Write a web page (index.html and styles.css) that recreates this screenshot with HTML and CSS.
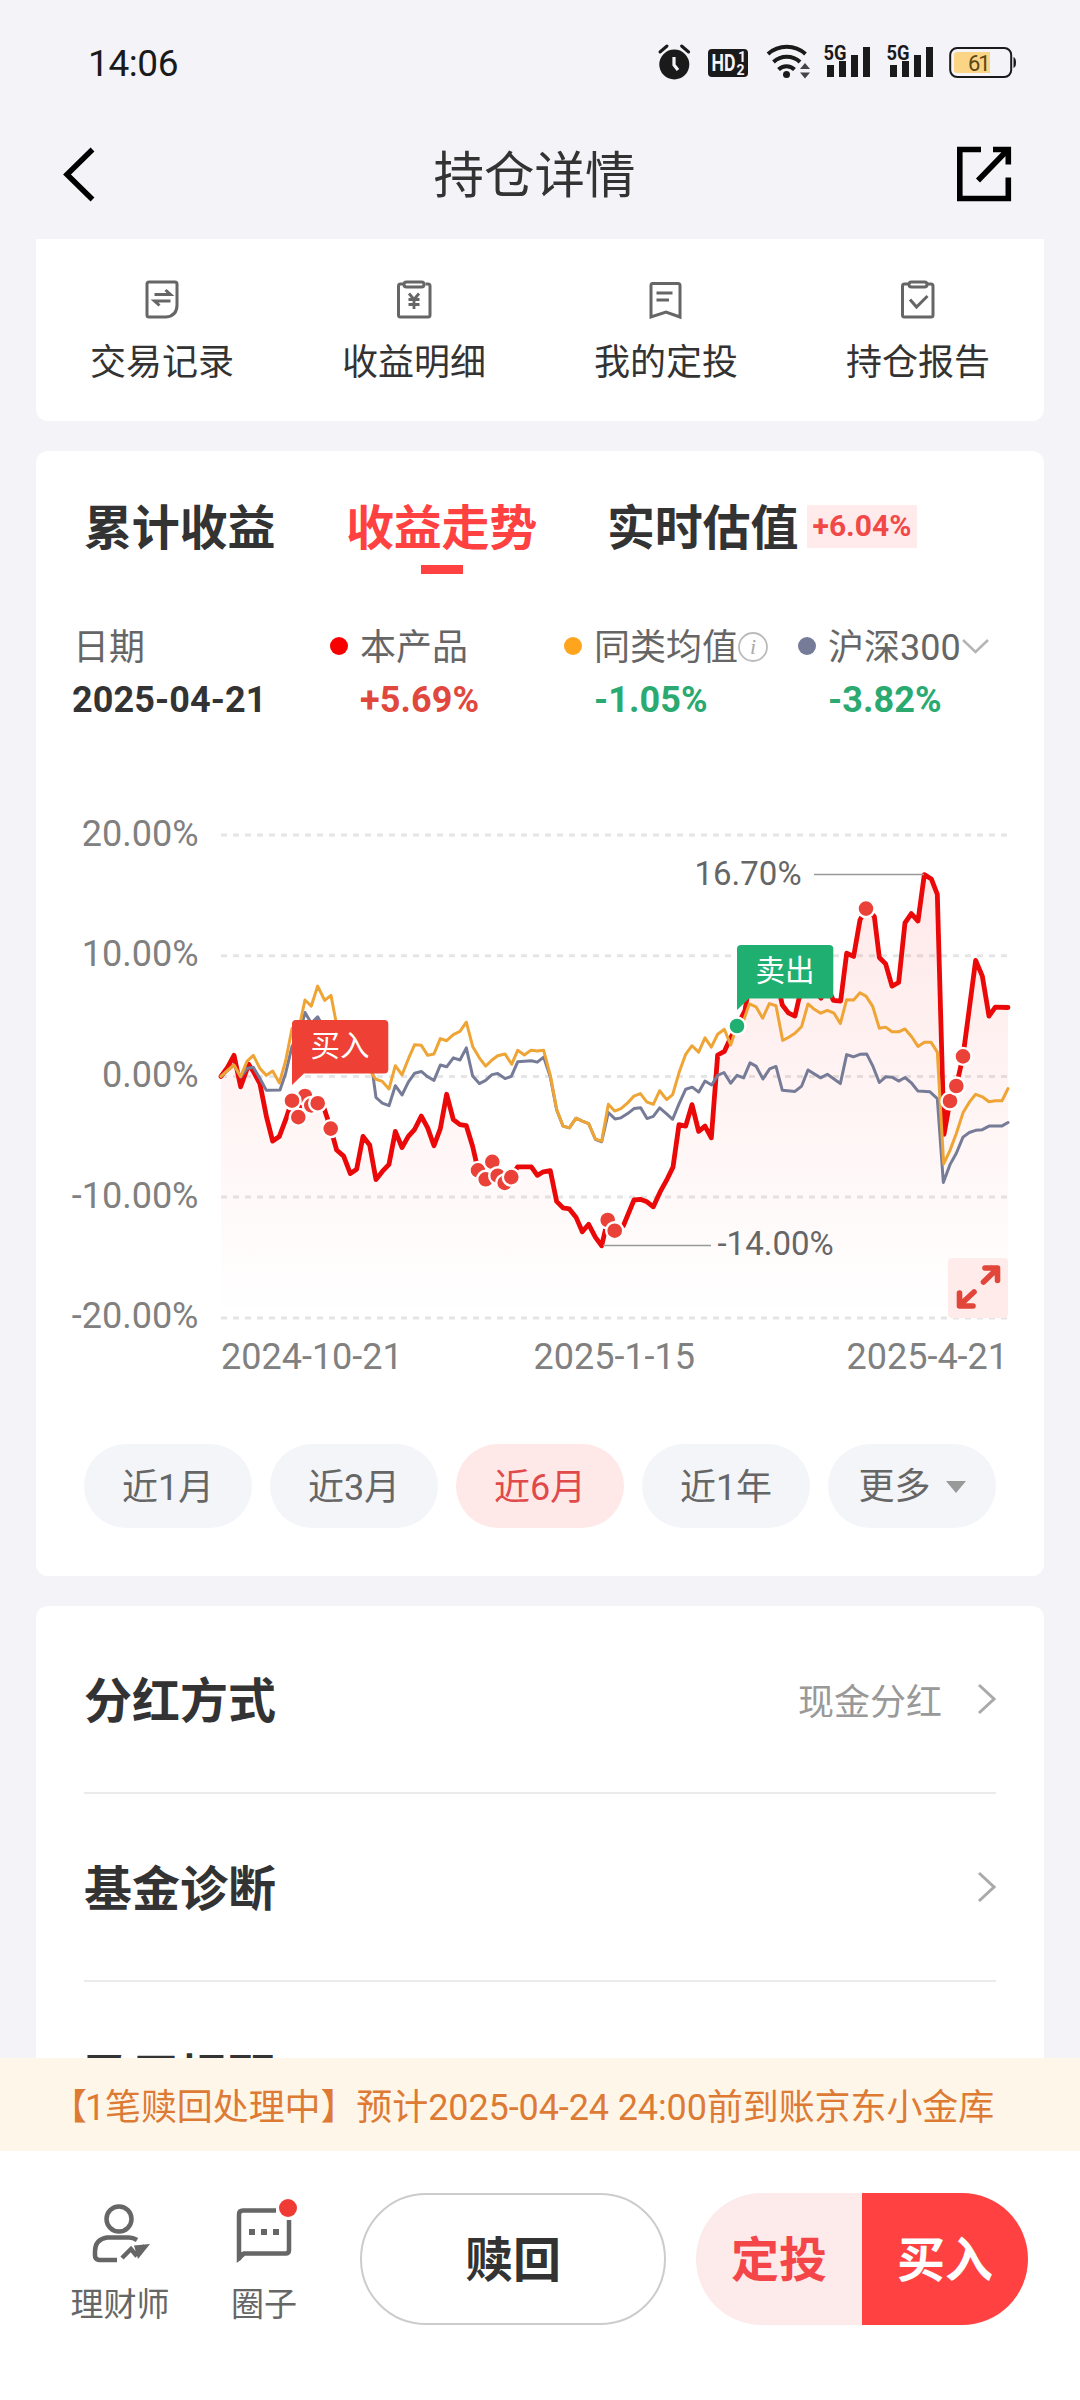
FILE: index.html
```html
<!DOCTYPE html>
<html lang="zh-CN">
<head>
<meta charset="utf-8">
<title>持仓详情</title>
<link rel="stylesheet" href="styles.css">
</head>
<body>
<div class="page">
  <div class="status">
    <span class="clock">14:06</span>
    <svg class="status-icons" width="374" height="50" viewBox="650 38 374 50">
      <g fill="#1a1a1a">
        <circle cx="674.3" cy="64.5" r="15"/>
        <path d="M660 52l7-6M688.600 52l-7-6" stroke="#1a1a1a" stroke-width="3" stroke-linecap="round"/>
        <path d="M674 57v8l4 5" stroke="#f4f3f8" stroke-width="3.200" fill="none"/>
        <rect x="708" y="49" width="40" height="28" rx="4"/>
        <text class="hd" x="711.500" y="71" fill="#f4f3f8" textLength="24" lengthAdjust="spacingAndGlyphs">HD</text>
        <text class="hd-s" x="738" y="62" fill="#f4f3f8">1</text>
        <text class="hd-s" x="736.500" y="74.500" fill="#f4f3f8">2</text>
        <circle cx="786.500" cy="74.500" r="3.500"/>
        <path d="M778.500 69.500a11.500 11.500 0 0 1 16 0M773.500 62a19.500 19.500 0 0 1 26.500 0M768 54a28 28 0 0 1 37.500 0" fill="none" stroke="#1a1a1a" stroke-width="4"/>
        <path d="M800 69l5-6 5 6zM800 72.500l5 6 5-6z" fill="#444"/>
        <text class="net" x="823.500" y="60" textLength="23" lengthAdjust="spacingAndGlyphs">5G</text>
        <path d="M827 65h7v12h-7zM839 61h7v16h-7zM851 55h7v22h-7zM863 47h7v30h-7z"/>
        <text class="net" x="886.500" y="60" textLength="23" lengthAdjust="spacingAndGlyphs">5G</text>
        <path d="M890 65h7v12h-7zM902 61h7v16h-7zM914 55h7v22h-7zM926 47h7v30h-7z"/>
        <path d="M1013.500 57q2.500 1 2.500 5.500t-2.500 5.500z"/>
      </g>
      <path d="M957 52h33v21h-33q-3 0-3-3v-15q0-3 3-3z" fill="#fad585"/>
      <rect x="950.200" y="48" width="61" height="29" rx="7" fill="none" stroke="#1a1a1a" stroke-width="2"/>
      <text class="bat" x="968" y="71">61</text>
    </svg>
  </div>

  <header class="header">
    <svg width="56" height="60" viewBox="62 143 56 60"><path d="M92.500 148.500L67 173.500l25.500 25" fill="none" stroke="#000" stroke-width="5.500"/></svg>
    <h1>持仓详情</h1>
    <svg width="56" height="58" viewBox="956 145.500 56 58"><path d="M981 150H959.800V199H1008.300V178M993 150H1008.300V165M1008 150L978 181" fill="none" stroke="#000" stroke-width="5.600"/></svg>
  </header>

  <main class="scroll">
    <nav class="card quick">
      <a class="quick-item">
        <svg width="44" height="44" viewBox="140 277 44 44"><path d="M149 282h26q2 0 2 2v21q0 11-11 12h-17q-2 0-2-2v-31q0-2 2-2z"/><path d="M154.500 294.500h16l-5-4.500M170.500 301h-16l5 4.500"/></svg>
        <span>交易记录</span>
      </a>
      <a class="quick-item">
        <svg width="44" height="44" viewBox="392 277 44 44"><path d="M403 284h-2.500q-2 0-2 2v29q0 2 2 2h27.500q2 0 2-2v-29q0-2-2-2h-2.500"/><rect x="404" y="282" width="20" height="5" rx="2.500"/><path d="M409 293.500l5 6 5-6M414 299v10M408.500 299.500h11M408.500 304.500h11" stroke-width="2.800"/></svg>
        <span>收益明细</span>
      </a>
      <a class="quick-item">
        <svg width="44" height="44" viewBox="644 277 44 44"><path d="M652.500 283.500h25.500q2 0 2 2v31.500l-14-5-15 5v-31.500q0-2 1.500-2z"/><path d="M656.500 293h16M656.500 300h12.500"/></svg>
        <span>我的定投</span>
      </a>
      <a class="quick-item">
        <svg width="44" height="44" viewBox="896 277 44 44"><path d="M908 284h-3.500q-2 0-2 2v29q0 2 2 2h26.500q2 0 2-2v-29q0-2-2-2h-3.500"/><rect x="909" y="282" width="18" height="5" rx="2.500"/><path d="M910 299.500l6.500 7.500 11-11"/></svg>
        <span>持仓报告</span>
      </a>
    </nav>

    <section class="card trend">
      <div class="tabs">
        <span class="tab">累计收益</span>
        <span class="tab active">收益走势</span>
        <span class="tab">实时估值</span>
        <span class="tag">+6.04%</span>
      </div>

      <div class="legend">
        <div class="date"><div class="name">日期</div><div class="val">2025-04-21</div></div>
        <div class="series">
          <i class="dot red"></i>
          <div><div class="name">本产品</div><div class="val up">+5.69%</div></div>
        </div>
        <div class="series">
          <i class="dot gold"></i>
          <div>
            <div class="name">同类均值<svg width="32" height="32" viewBox="1 1 32 32"><circle cx="16" cy="16" r="14" fill="none" stroke="#bbb" stroke-width="1.800"/><text class="info" x="16" y="23" text-anchor="middle">i</text></svg></div>
            <div class="val down">-1.05%</div>
          </div>
        </div>
        <div class="series">
          <i class="dot slate"></i>
          <div>
            <div class="name">沪深300<svg width="30" height="20" viewBox="1 1 30 20"><path d="M3 3l12.500 12L28 3" fill="none" stroke="#b5b5b5" stroke-width="2.500"/></svg></div>
            <div class="val down">-3.82%</div>
          </div>
        </div>
      </div>

      <svg class="chart" width="1008" height="680" viewBox="36 723 1008 680">
        <defs>
          <linearGradient id="fade" gradientUnits="userSpaceOnUse" x1="0" y1="209" x2="0" y2="1450">
            <stop offset="0" stop-color="#ff2020" stop-opacity=".1"/>
            <stop offset=".5" stop-color="#ff2020" stop-opacity=".05"/>
            <stop offset="1" stop-color="#ff2020" stop-opacity="0"/>
          </linearGradient>
        </defs>
        <path class="grid" d="M221 835H1008M221 955.700H1008M221 1076.400H1008M221 1197.100H1008M221 1317.900H1008"/>
        <g class="axis" text-anchor="end">
          <text x="198.500" y="846">20.00%</text>
          <text x="198.500" y="966">10.00%</text>
          <text x="198.500" y="1086.500">0.00%</text>
          <text x="198.500" y="1207.500">-10.00%</text>
          <text x="198.500" y="1328">-20.00%</text>
        </g>
        <g class="axis">
          <text x="221" y="1368.500">2024-10-21</text>
          <text x="533.500" y="1368.500">2025-1-15</text>
          <text x="846.500" y="1368.500">2025-4-21</text>
        </g>
        <!-- Series are plotted in plot units: 33.8 per percent, 19.35 per trading day -->
        <g class="lines" transform="translate(200 800) scale(.33333 .35714)">
          <path fill="url(#fade)" stroke="none" d="M63 1450V774L83 748 102 715 122 803 146 740 160 760 180 795 199 885 218 955 238 942 257 895 276 842 295 888 315 829 334 855 353 849 373 865 392 920 410 980 431 997 451 1046 470 1034 489 942 509 966 528 1063 547 1040 567 1020 586 928 606 973 625 942 644 922 664 885 683 918 702 968 721 920 740 824 760 895 780 909 799 912 818 970 834 1035 853 1062 877 1013 893 1052 913 1072 934 1056 953 1027 994 1027 1012 1051 1030 1041 1051 1038 1070 1124 1089 1142 1108 1145 1128 1168 1147 1209 1166 1188 1186 1224 1205 1248 1223 1176 1244 1206 1270 1192 1302 1120 1321 1118 1341 1125 1360 1139 1380 1098 1399 1066 1419 1028 1437 909 1457 913 1476 853 1496 928 1515 913 1534 946 1553 714 1573 704 1592 666 1611 633 1635 590 1645 530 1665 500 1700 490 1725 510 1740 545 1747 574 1765 596 1785 605 1797 556 1820 515 1840 530 1863 555 1880 520 1900 561 1922 563 1940 429 1961 438 1980 336 1998 304 2023 326 2038 441 2057 459 2076 521 2096 511 2115 344 2134 318 2154 339 2173 209 2194 221 2212 264 2232 936 2250 843 2269 801 2289 718 2327 449 2347 493 2367 605 2386 580 2424 581V1450Z"/>
          <polyline class="l-red" points="63,774 83,748 102,715 122,803 146,740 160,760 180,795 199,885 218,955 238,942 257,895 276,842 295,888 315,829 334,855 353,849 373,865 392,920 410,980 431,997 451,1046 470,1034 489,942 509,966 528,1063 547,1040 567,1020 586,928 606,973 625,942 644,922 664,885 683,918 702,968 721,920 740,824 760,895 780,909 799,912 818,970 834,1035 853,1062 877,1013 893,1052 913,1072 934,1056 953,1027 994,1027 1012,1051 1030,1041 1051,1038 1070,1124 1089,1142 1108,1145 1128,1168 1147,1209 1166,1188 1186,1224 1205,1248 1223,1176 1244,1206 1270,1192 1302,1120 1321,1118 1341,1125 1360,1139 1380,1098 1399,1066 1419,1028 1437,909 1457,913 1476,853 1496,928 1515,913 1534,946 1553,714 1573,704 1592,666 1611,633 1635,590 1645,530 1665,500 1700,490 1725,510 1740,545 1747,574 1765,596 1785,605 1797,556 1820,515 1840,530 1863,555 1880,520 1900,561 1922,563 1940,429 1961,438 1980,336 1998,304 2023,326 2038,441 2057,459 2076,521 2096,511 2115,344 2134,318 2154,339 2173,209 2194,221 2212,264 2232,936 2250,843 2269,801 2289,718 2327,449 2347,493 2367,605 2386,580 2424,581"/>
          <polyline class="l-slate" points="63,774 83,757 102,742 122,776 141,752 160,748 180,780 199,813 240,812 257,765 276,690 300,650 315,595 334,625 353,607 372,640 412,660 450,720 490,740 518,765 528,833 547,849 567,856 586,800 606,826 625,790 644,765 664,760 683,775 702,785 721,742 740,747 760,722 780,728 799,694 818,773 838,794 857,785 876,769 893,766 915,780 934,774 953,733 994,730 1012,734 1031,720 1051,776 1070,868 1089,913 1108,918 1128,891 1147,899 1166,906 1186,950 1205,957 1225,875 1245,893 1263,890 1283,878 1302,864 1322,862 1341,892 1360,886 1379,862 1399,878 1418,894 1437,851 1457,810 1477,804 1496,818 1515,787 1535,798 1553,771 1572,763 1592,793 1611,771 1631,778 1650,736 1668,745 1689,781 1709,753 1728,746 1747,813 1785,816 1805,801 1824,756 1862,778 1882,768 1921,794 1940,713 1960,719 1980,712 2000,711 2019,746 2038,791 2057,775 2076,776 2096,787 2115,777 2135,793 2154,815 2190,817 2212,836 2230,1071 2250,1021 2269,989 2289,944 2308,931 2327,925 2347,923 2367,913 2405,913 2424,903"/>
          <polyline class="l-gold" points="63,774 83,757 102,742 122,774 141,732 160,715 180,752 199,771 218,759 238,792 257,730 276,640 300,625 315,560 334,577 353,521 374,561 393,547 412,640 450,700 490,730 515,765 528,782 547,788 567,809 586,744 606,770 625,725 644,685 664,687 683,715 702,711 721,668 740,674 760,657 780,648 799,622 818,690 838,722 857,745 876,728 893,716 915,711 935,740 953,701 973,714 992,701 1012,703 1031,701 1051,771 1070,866 1089,913 1108,918 1128,891 1147,899 1166,906 1186,949 1205,955 1225,852 1244,871 1263,864 1283,848 1302,829 1321,822 1341,846 1360,852 1379,814 1400,839 1418,825 1437,764 1457,712 1476,688 1496,706 1515,666 1534,692 1553,656 1573,642 1592,686 1611,633 1630,620 1648,571 1668,579 1688,611 1708,570 1728,576 1748,673 1765,665 1785,653 1805,634 1824,571 1843,586 1862,597 1882,589 1902,597 1921,626 1940,559 1961,560 1980,540 1998,549 2018,578 2038,639 2057,636 2076,649 2096,649 2115,641 2135,663 2154,690 2173,678 2193,678 2212,706 2231,1019 2250,981 2269,934 2289,876 2308,846 2327,824 2347,831 2367,845 2386,842 2406,842 2424,808"/>
        </g>
        <path d="M814 874.600H924M603 1245.400H711" stroke="#999" stroke-width="1.500"/>
        <g class="peak">
          <text x="694.500" y="885">16.70%</text>
          <text x="717.500" y="1255">-14.00%</text>
        </g>
        <g class="marks">
          <circle cx="305" cy="1096" r="8.500"/><circle cx="311.300" cy="1105.400" r="8.500"/><circle cx="298.300" cy="1117.100" r="8.500"/><circle cx="292" cy="1100.700" r="8.500"/><circle cx="317.700" cy="1103.200" r="8.500"/><circle cx="330.700" cy="1128.600" r="8.500"/>
          <circle cx="478" cy="1170.400" r="8.500"/><circle cx="485.700" cy="1179.300" r="8.500"/><circle cx="492.300" cy="1161.800" r="8.500"/><circle cx="497.700" cy="1175.700" r="8.500"/><circle cx="504.700" cy="1182.900" r="8.500"/><circle cx="511.300" cy="1177.100" r="8.500"/>
          <circle cx="607.700" cy="1220" r="8.500"/><circle cx="614.700" cy="1230.700" r="8.500"/>
          <circle cx="866" cy="908.600" r="8.500"/>
          <circle cx="950" cy="1101" r="8.500"/><circle cx="956.300" cy="1086" r="8.500"/><circle cx="963" cy="1056.400" r="8.500"/>
          <circle class="sell" cx="737" cy="1026" r="8.500"/>
        </g>
        <path fill="#ee4035" d="M292 1085V1024q0-4 4-4h88.300q4 0 4 4v45.600q0 4-4 4H304z"/>
        <path fill="#1fb071" d="M737 1010V949q0-4 4-4h88.300q4 0 4 4v45.600q0 4-4 4H749z"/>
        <g class="flag" text-anchor="middle">
          <text x="340" y="1055.500">买入</text>
          <text x="785" y="981">卖出</text>
        </g>
        <rect x="948" y="1258" width="60" height="60" rx="4" fill="#ffebea"/>
        <path d="M983.500 1282L997 1269M985 1268H997.500V1280.500M974 1292L960 1305M959.500 1293V1306H973" fill="none" stroke="#e2453a" stroke-width="5.600" stroke-linecap="round" stroke-linejoin="round"/>
      </svg>

      <div class="ranges">
        <span class="pill">近1月</span>
        <span class="pill">近3月</span>
        <span class="pill on">近6月</span>
        <span class="pill">近1年</span>
        <span class="pill more">更多<i class="caret"></i></span>
      </div>
    </section>

    <section class="card rows">
      <div class="row"><b>分红方式</b><span>现金分红</span><svg width="20" height="34" viewBox="-1 0 20 34"><path d="M2 3l15 14L2 31"/></svg></div>
      <div class="row"><b>基金诊断</b><svg width="20" height="34" viewBox="-1 0 20 34"><path d="M2 3l15 14L2 31"/></svg></div>
      <div class="row"><b>盈亏提醒</b></div>
    </section>
  </main>

  <div class="notice"><span class="bracket">【</span>1笔赎回处理中】预计2025-04-24 24:00前到账京东小金库</div>

  <footer class="bar">
    <a class="bar-item">
      <svg width="64" height="66" viewBox="88 2200 64 66"><g fill="none" stroke="#666" stroke-width="4.500"><circle cx="119" cy="2219" r="12.500"/><path d="M137 2240q-4-2.500-8-2.500H107q-12 2-12 14v4q0 4 4 4.500h18"/><path d="M122 2258l9-9 4.500 5.500L145 2246"/></g><path fill="#666" d="M134 2245.500l16-1.500-12 15z"/></svg>
      <span>理财师</span>
    </a>
    <a class="bar-item">
      <svg class="chat" width="64" height="66" viewBox="232 2200 64 66"><path d="M276 2210.500H243q-4 0-4 4V2258l5-4.500H285.500q3.500 0 3.500-3.500V2220" fill="none" stroke="#666" stroke-width="4.500"/><path fill="#666" d="M237 2252h8l-4 8-4 2zM249 2229h6v6h-6zM261 2229h6v6h-6zM273 2229h6v6h-6z"/><circle cx="288" cy="2208" r="9" fill="#f03a34"/></svg>
      <span>圈子</span>
    </a>
    <button class="redeem">赎回</button>
    <div class="split"><button class="plan">定投</button><button class="buy">买入</button></div>
  </footer>
</div>
</body>
</html>
```
FILE: styles.css
```css
* { box-sizing: border-box; }
body {
  margin: 0;
  background: #f4f3f8;
  color: #333;
  font-family: Roboto, "Noto Sans CJK SC", sans-serif;
}
.page {
  display: flex;
  flex-direction: column;
  width: 1080px;
  height: 2400px;
  overflow: hidden;
}
.status {
  display: flex;
  justify-content: space-between;
  align-items: center;
  height: 110px;
  padding: 16px 56px 0 88px;
}
.clock { padding-top: 2px; font-size: 37px; line-height: 50px; color: #1a1a1a; letter-spacing: -.4px; }
.hd { font-size: 23px; font-weight: 700; }
.hd-s { font-size: 14px; font-weight: 700; }
.net { font-size: 21px; font-weight: 700; }
.bat { font-size: 22px; fill: #5a4718; letter-spacing: -2px; }

.header {
  display: flex;
  justify-content: space-between;
  align-items: center;
  height: 129px;
  padding: 0 68px 2px 62px;
}
.header h1 {
  margin: 0 5px 0 0;
  padding-top: 4px;
  font-size: 50.500px;
  line-height: 60px;
  font-weight: 400;
}

.scroll { height: 1819px; overflow: hidden; }
.card {
  margin: 0 36px 30px;
  border-radius: 12px;
  background: #fff;
}
.quick {
  display: grid;
  grid-template-columns: repeat(4, 1fr);
  height: 182px;
  padding-top: 38px;
  border-radius: 0 0 12px 12px;
}
.quick-item {
  display: flex;
  flex-direction: column;
  align-items: center;
  gap: 18px;
  font-size: 36px;
  line-height: 48px;
}
.quick-item svg { fill: none; stroke: #666; stroke-width: 3; }

.trend { height: 1125px; padding-top: 52px; }
.tabs {
  display: flex;
  height: 72px;
  padding-left: 48px;
  font-size: 48px;
  line-height: 52px;
  font-weight: 700;
}
.tab { width: 192px; margin-right: 69.500px; letter-spacing: -.2px; }
.tab:nth-child(3) { margin-right: 8px; }
.tab.active {
  display: flex;
  flex-direction: column;
  align-items: center;
  justify-content: space-between;
  color: #ff4142;
}
.tab.active::after {
  content: "";
  width: 42px;
  height: 9px;
  margin-bottom: 1px;
  background: #ff4142;
}
.tag {
  width: 110px;
  height: 43px;
  margin-top: 2px;
  background: #ffebeb;
  color: #f14948;
  font-size: 30px;
  line-height: 42px;
  text-align: center;
}
.legend {
  display: grid;
  grid-template-columns: 257px 234px 234px 1fr;
  margin-top: 49px;
  padding-left: 37px;
  font-size: 36px;
  line-height: 50px;
}
.name { display: flex; align-items: center; height: 48px; color: #666; line-height: 49px; }
.val { height: 48px; margin-top: 3px; font-weight: 700; letter-spacing: .1px; }
.date .val { margin-left: -1px; }
.val.up { color: #e0483e; }
.val.down { color: #2aaa70; }
.series { display: flex; }
.dot {
  width: 18px;
  height: 18px;
  margin: 13px 12px 0 0;
  border-radius: 50%;
}
.dot.red { background: #f60000; }
.dot.gold { background: #fea41d; }
.dot.slate { background: #767c98; }
.info { font: italic 22px "Liberation Serif", serif; fill: #aaa; }

.chart { display: block; }
.grid { stroke: #e5e5e5; stroke-width: 3; stroke-dasharray: 6 6; }
.axis { font-size: 36px; fill: #808080; }
.peak { font-size: 33px; fill: #666; }
.flag { font-size: 29.500px; fill: #fff; }
.lines polyline { fill: none; vector-effect: non-scaling-stroke; stroke-linejoin: round; stroke-linecap: round; }
.lines .l-red { stroke: #ea0808; stroke-width: 4.800; }
.lines .l-slate { stroke: #767c98; stroke-width: 3; }
.lines .l-gold { stroke: #efa436; stroke-width: 3; }
.marks circle { fill: #ea4238; stroke: #fff; stroke-width: 2.400; }
.marks .sell { fill: #1fb071; }

.ranges { display: flex; gap: 18px; margin: 41px 48px 0; }
.pill {
  width: 168px;
  height: 84px;
  border-radius: 42px;
  background: #f4f5f8;
  color: #666;
  font-size: 36px;
  line-height: 89px;
  text-align: center;
}
.pill.on { background: #ffe8e8; color: #e04a4b; }
.pill.more { display: flex; align-items: center; justify-content: center; gap: 15px; line-height: 84px; padding-top: 2px; }
.caret { border: 10px solid transparent; border-top: 12px solid #999; border-bottom: 0; }

.rows { padding: 0 48px; }
.row {
  display: flex;
  align-items: center;
  height: 188px;
  border-bottom: 2px solid #ebebeb;
}
.row b { flex: 1; padding-top: 6px; font-size: 48px; line-height: 48px; }
.row span { margin-right: 34px; color: #999; font-size: 36px; }
.row svg { fill: none; stroke: #aaa; stroke-width: 3; }

.notice {
  height: 93px;
  padding-left: 51px;
  background: #fff6ea;
  color: #dd7b35;
  font-size: 36px;
  line-height: 100px;
  white-space: nowrap;
  letter-spacing: -.1px;
}
.bracket { margin-right: -2px; }
.bar {
  display: flex;
  align-items: flex-start;
  height: 249px;
  padding: 42px 0 0 48px;
  background: #fff;
}
.bar-item {
  display: flex;
  flex-direction: column;
  align-items: center;
  width: 144px;
  padding-top: 7px;
  gap: 19px;
  color: #666;
  font-size: 33px;
  line-height: 40px;
}
.chat { overflow: visible; }
button {
  height: 132px;
  padding: 4px 0 0;
  border: 0;
  font: 700 48px/128px Roboto, "Noto Sans CJK SC", sans-serif;
}
.redeem {
  width: 306px;
  margin: 0 30px 0 24px;
  border: 2px solid #ccc;
  border-radius: 66px;
  background: #fff;
  color: #333;
  line-height: 124px;
}
.split { display: flex; width: 332px; border-radius: 66px; overflow: hidden; }
.split button { flex: 1; }
.plan { background: #fdeaea; color: #f44648; }
.buy { background: #ff4142; color: #fff; }
```
